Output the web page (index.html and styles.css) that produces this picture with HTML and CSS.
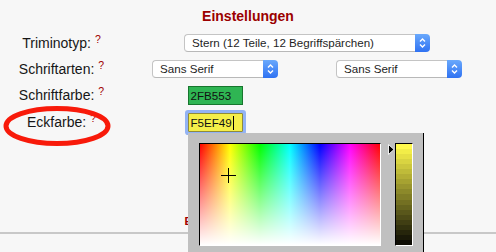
FILE: index.html
```html
<!DOCTYPE html>
<html lang="de">
<head>
<meta charset="utf-8">
<title>Einstellungen</title>
<link rel="stylesheet" href="styles.css">
</head>
<body>
<div class="page">
  <h1 class="title">Einstellungen</h1>
  <div class="form">
    <div class="label">Triminotyp:<sup class="help">?</sup></div>
    <div class="cell span2">
      <div class="select wide">
        <span class="sel-text">Stern (12 Teile, 12 Begriffspärchen)</span>
        <span class="sel-btn"><svg viewBox="0 0 15 18" width="15" height="18"><path d="M5 7.5 L7.5 5 L10 7.5 M5 10.5 L7.5 13 L10 10.5" fill="none" stroke="#fff" stroke-width="1.4"/></svg></span>
      </div>
    </div>

    <div class="label">Schriftarten:<sup class="help">?</sup></div>
    <div class="cell">
      <div class="select narrow">
        <span class="sel-text">Sans Serif</span>
        <span class="sel-btn"><svg viewBox="0 0 15 18" width="15" height="18"><path d="M5 7.5 L7.5 5 L10 7.5 M5 10.5 L7.5 13 L10 10.5" fill="none" stroke="#fff" stroke-width="1.4"/></svg></span>
      </div>
    </div>
    <div class="cell">
      <div class="select narrow">
        <span class="sel-text">Sans Serif</span>
        <span class="sel-btn"><svg viewBox="0 0 15 18" width="15" height="18"><path d="M5 7.5 L7.5 5 L10 7.5 M5 10.5 L7.5 13 L10 10.5" fill="none" stroke="#fff" stroke-width="1.4"/></svg></span>
      </div>
    </div>

    <div class="label">Schriftfarbe:<sup class="help">?</sup></div>
    <div class="cell"><div class="color green">2FB553</div></div>
    <div class="cell"></div>

    <div class="label">Eckfarbe:<sup class="help">?</sup></div>
    <div class="cell">
      <div class="color-field">
        <div class="color yellow">F5EF49<span class="caret"></span></div>
        <div class="picker">
          <div class="sv">
            <span class="cross-h"></span>
            <span class="cross-v"></span>
          </div>
          <svg class="pointer" viewBox="0 0 7 11" width="7" height="11"><polygon points="0.5,0.5 6,5.5 0.5,10.5" fill="#000" stroke="#fff" stroke-width="0.9"/></svg>
          <div class="bar"></div>
        </div>
      </div>
    </div>
    <div class="cell"></div>
  </div>
  <p class="save">Einstellungen speichern</p>
  <hr class="rule">
  <svg class="mark" viewBox="0 0 120 50" width="120" height="50"><ellipse cx="57" cy="26" rx="51" ry="17.5" fill="none" stroke="#f81a0a" stroke-width="5"/></svg>
</div>
</body>
</html>
```

FILE: styles.css
```css
* { box-sizing: border-box; }
html, body { margin: 0; padding: 0; }
body {
  background: #f7f7f7;
  font-family: "Liberation Sans", Arial, sans-serif;
  color: #222;
  width: 496px;
  height: 252px;
  overflow: hidden;
}
.page { position: relative; height: 252px; }
.title {
  margin: 0;
  padding-top: 8px;
  height: 30px;
  font-size: 14px;
  line-height: 17px;
  font-weight: bold;
  color: #9b0000;
  text-align: center;
}
.form {
  display: grid;
  grid-template-columns: 123px 184px 184px;
  grid-template-rows: 26px 26px 27px 27px;
  align-items: center;
}
.label {
  font-size: 14px;
  line-height: 17px;
  text-align: center;
  white-space: nowrap;
  color: #161616;
}
.help {
  font-size: 10.5px;
  line-height: 0;
  color: #a00000;
  vertical-align: 5px;
  margin-left: 4px;
}
.cell { display: flex; justify-content: center; align-items: center; }
.span2 { grid-column: 2 / 4; }

.select { display: flex; height: 18px; font-size: 11.6px; color: #1e1e1e; }
.select.wide { width: 246px; }
.select.narrow { width: 126px; }
.sel-text {
  flex: 1;
  background: #fff;
  border: 1px solid #c4c4c4;
  border-right: 0;
  border-bottom-color: #b8b8b8;
  border-radius: 4px 0 0 4px;
  padding-left: 7px;
  line-height: 16px;
  white-space: nowrap;
  overflow: hidden;
}
.sel-btn {
  width: 15px;
  height: 18px;
  border-radius: 0 4px 4px 0;
  background: linear-gradient(#6aa9fc, #2f72f2);
  display: flex;
}

.color {
  width: 55px;
  height: 19px;
  border: 1px solid #000;
  padding-left: 2px;
  font-size: 11.6px;
  line-height: 17px;
  color: #111;
  display: flex;
  align-items: center;
}
.green { background: #2fb553; border-color: #17762e; }
.yellow {
  background: #f5ef49;
  border-color: #8f8a3a;
  border-radius: 1px;
  box-shadow: 0 0 0 3px #93b3f4;
}
.caret { display: inline-block; width: 1px; height: 14px; background: #000; margin-left: 1px; }

.color-field { position: relative; }
.picker {
  position: absolute;
  left: 0;
  top: calc(100% + 1px);
  z-index: 2;
  display: flex;
  align-items: flex-start;
  padding: 10px 10px 0 11px;
  height: 130px;
  background: #c0c0c0;
  border-right: 1px solid #000;
}
.sv {
  position: relative;
  width: 182px;
  height: 103px;
  border: 1px solid;
  border-color: #000 #fff #fff #000;
  background:
    linear-gradient(to bottom, rgba(255,255,255,0), #fff),
    linear-gradient(to right, #f00 0%, #ff0 16.67%, #0f0 33.33%, #0ff 50%, #00f 66.67%, #f0f 83.33%, #f00 100%);
}
.cross-h { position: absolute; left: 21px; top: 31px; width: 15px; height: 1px; background: #000; }
.cross-v { position: absolute; left: 28px; top: 24px; width: 1px; height: 15px; background: #000; }
.pointer { margin-left: 7px; margin-top: 1px; display: block; }
.bar {
  width: 18px;
  height: 103px;
  border: 1px solid;
  border-color: #000 #fff #fff #000;
  background: linear-gradient(to bottom,
    rgb(255,249,76) 0 5%, rgb(242,237,72) 5% 10%, rgb(230,224,68) 10% 15%, rgb(217,212,65) 15% 20%,
    rgb(204,199,61) 20% 25%, rgb(191,187,57) 25% 30%, rgb(179,174,53) 30% 35%, rgb(166,162,49) 35% 40%,
    rgb(153,149,46) 40% 45%, rgb(140,137,42) 45% 50%, rgb(128,125,38) 50% 55%, rgb(115,112,34) 55% 60%,
    rgb(102,100,30) 60% 65%, rgb(89,87,27) 65% 70%, rgb(77,75,23) 70% 75%, rgb(64,62,19) 75% 80%,
    rgb(51,50,15) 80% 85%, rgb(38,37,11) 85% 90%, rgb(26,25,8) 90% 95%, rgb(13,12,4) 95% 100%);
}

.save {
  margin: 79px 0 0;
  font-size: 11px;
  line-height: 13px;
  font-weight: bold;
  color: #a00000;
  text-align: center;
}
.rule {
  margin: 4px 0 0;
  border: 0;
  height: 2px;
  background: #c8c8c8;
}
.mark { position: absolute; left: 0; top: 100px; pointer-events: none; }
```
